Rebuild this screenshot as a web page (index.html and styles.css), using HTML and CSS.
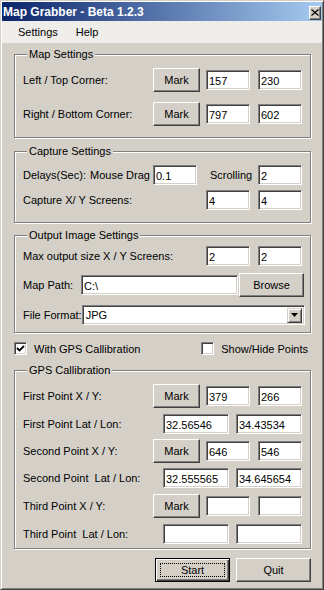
FILE: index.html
```html
<!DOCTYPE html>
<html lang="en">

<head>
    <meta charset="UTF-8">
    <title>Map Grabber - Beta 1.2.3</title>
    <link rel="stylesheet" href="styles.css">
</head>

<body>
    <div class="window">
        <div class="titlebar">
            <span class="title">Map Grabber - Beta 1.2.3</span>
            <span class="close">
                <svg width="8" height="7" viewBox="0 0 8 7"><path d="M0.5 0.5 L7.5 6.5 M7.5 0.5 L0.5 6.5" stroke="#000" stroke-width="1.3" fill="none"/></svg>
            </span>
        </div>
        <div class="menubar">
            <span class="menu">Settings</span>
            <span class="menu">Help</span>
        </div>

        <div class="client">
            <!-- Map settings -->
            <div class="group map">
                <div class="legend">Map Settings</div>
                <div class="row r1">
                    <span class="label">Left / Top Corner:</span>
                    <button class="btn mark">Mark</button>
                    <input class="field xy" value="157">
                    <input class="field xy gap" value="230">
                </div>
                <div class="row r2">
                    <span class="label">Right / Bottom Corner:</span>
                    <button class="btn mark">Mark</button>
                    <input class="field xy" value="797">
                    <input class="field xy gap" value="602">
                </div>
            </div>

            <!-- Capture settings -->
            <div class="group capture">
                <div class="legend">Capture Settings</div>
                <div class="row r1">
                    <span class="label delays">Delays(Sec):</span>
                    <span class="label drag">Mouse Drag</span>
                    <input class="field xy" value="0.1">
                    <span class="label scroll">Scrolling</span>
                    <input class="field xy" value="2">
                </div>
                <div class="row r2">
                    <span class="label">Capture X/ Y Screens:</span>
                    <input class="field xy" value="4">
                    <input class="field xy gap" value="4">
                </div>
            </div>

            <!-- Output image settings -->
            <div class="group output">
                <div class="legend">Output Image Settings</div>
                <div class="row r1">
                    <span class="label">Max output size X / Y Screens:</span>
                    <input class="field xy" value="2">
                    <input class="field xy gap" value="2">
                </div>
                <div class="row r2">
                    <span class="label short">Map Path:</span>
                    <input class="field path" value="C:\">
                    <button class="btn browse">Browse</button>
                </div>
                <div class="row r3">
                    <span class="label short">File Format:</span>
                    <div class="select">
                        <span class="value">JPG</span>
                        <span class="arrow">
                            <svg width="7" height="4" viewBox="0 0 7 4"><path d="M0 0 H7 L3.5 4 Z" fill="#000"/></svg>
                        </span>
                    </div>
                </div>
            </div>

            <div class="checks">
                <label class="check">
                    <span class="box">
                        <svg width="9" height="9" viewBox="0 0 9 9"><path d="M1 4 L3.5 6.5 L8 2" stroke="#000" stroke-width="1.8" fill="none"/></svg>
                    </span>
                    With GPS Callibration
                </label>
                <label class="check">
                    <span class="box"></span>
                    Show/Hide Points
                </label>
            </div>

            <!-- GPS callibration -->
            <div class="group gps">
                <div class="legend">GPS Callibration</div>
                <div class="row g1">
                    <span class="label">First Point X / Y:</span>
                    <button class="btn mark">Mark</button>
                    <input class="field xy" value="379">
                    <input class="field xy gap" value="266">
                </div>
                <div class="row g2">
                    <span class="label">First Point Lat / Lon:</span>
                    <input class="field ll" value="32.56546">
                    <input class="field ll" value="34.43534">
                </div>
                <div class="row g3">
                    <span class="label">Second Point X / Y:</span>
                    <button class="btn mark">Mark</button>
                    <input class="field xy" value="646">
                    <input class="field xy gap" value="546">
                </div>
                <div class="row g4">
                    <span class="label">Second Point&nbsp; Lat / Lon:</span>
                    <input class="field ll" value="32.555565">
                    <input class="field ll" value="34.645654">
                </div>
                <div class="row g5">
                    <span class="label">Third Point X / Y:</span>
                    <button class="btn mark">Mark</button>
                    <input class="field xy" value="">
                    <input class="field xy gap" value="">
                </div>
                <div class="row g6">
                    <span class="label">Third Point&nbsp; Lat / Lon:</span>
                    <input class="field ll" value="">
                    <input class="field ll" value="">
                </div>
            </div>

            <div class="actions">
                <button class="btn action default"><span class="focus">Start</span></button>
                <button class="btn action">Quit</button>
            </div>
        </div>
    </div>
</body>

</html>
```

FILE: styles.css
```css
body {
    margin: 0;
    background: #d4d0c8;
    font-family: "Liberation Sans", Arial, sans-serif;
    font-size: 11px;
    color: #000;
}

.window {
    width: 324px;
    height: 590px;
    box-sizing: border-box;
    padding: 1px;
    border: 1px solid;
    border-color: #d4d0c8 #404040 #404040 #d4d0c8;
    box-shadow: inset 1px 1px #fff, inset -1px -1px #808080;
    background: #d4d0c8;
    display: flex;
    flex-direction: column;
}

/* Title bar */
.titlebar {
    height: 19px;
    padding: 0 1px 0 1px;
    background: linear-gradient(to right, #0a246a, #a6caf0);
    color: #fff;
    font-size: 12px;
    font-weight: bold;
    display: flex;
    align-items: center;
    justify-content: space-between;
}

.close {
    width: 10px;
    height: 12px;
    border: 1px solid;
    border-color: #fff #404040 #404040 #fff;
    box-shadow: inset -1px -1px #808080;
    background: #d4d0c8;
    display: flex;
    align-items: center;
    justify-content: center;
    margin-top: 2px;
}

/* Menu */
.menubar {
    height: 22px;
    background: #efede9;
    display: flex;
    align-items: center;
    padding-left: 16px;
    gap: 18px;
}

/* Client area */
.client {
    padding: 0 10px 0 12px;
}

.group {
    border: 1px solid #808080;
    box-shadow: inset 1px 1px #fff, 1px 1px #fff;
    padding: 0 8px;
    width: 279px;
}

.legend {
    display: table;
    line-height: 13px;
    margin: -7px 0 0 4px;
    padding: 0 2px;
    background: #d4d0c8;
}

.row {
    display: flex;
    align-items: center;
}

.label {
    flex: 1;
    white-space: nowrap;
}

/* Controls */
.btn {
    font: inherit;
    color: #000;
    background: #d4d0c8;
    border: 1px solid;
    border-color: #fff #404040 #404040 #fff;
    box-shadow: inset -1px -1px #808080;
    padding: 0;
    height: 24px;
    box-sizing: border-box;
}

.field {
    font: inherit;
    color: #000;
    background: #fff;
    box-sizing: border-box;
    height: 20px;
    border: 1px solid;
    border-color: #808080 #fff #fff #808080;
    box-shadow: inset 1px 1px #404040, inset -1px -1px #d4d0c8;
    padding: 1px 2px 0;
    outline: none;
}

.mark {
    width: 47px;
    margin-right: 6px;
}

.xy {
    width: 44px;
}

.xy.gap {
    margin-left: 8px;
}

.ll {
    width: 66px;
    margin-left: 7px;
}

/* Map settings */
.map {
    margin-top: 11px;
    padding-bottom: 11px;
}

.map .r1 {
    margin-top: 7px;
}

.map .r2 {
    margin-top: 10px;
}

/* Capture settings */
.capture {
    margin-top: 13px;
    padding-bottom: 12px;
}

.capture .r1 {
    margin-top: 7px;
}

.capture .r2 {
    margin-top: 5px;
}

.delays {
    flex: 0 0 67px;
}

.drag {
    flex: 0 0 63px;
}

.scroll {
    margin-left: 13px;
}

/* Output settings */
.output {
    margin-top: 12px;
    padding-bottom: 7px;
}

.output .r1 {
    margin-top: 4px;
}

.output .r2 {
    margin-top: 7px;
    margin-right: -3px;
}

.output .r3 {
    margin-top: 8px;
    margin-right: -3px;
}

.short {
    flex: 0 0 58px;
}

.path {
    width: 157px;
}

.browse {
    width: 65px;
    margin-left: 1px;
}

.select {
    flex: 1;
    height: 20px;
    box-sizing: border-box;
    background: #fff;
    border: 1px solid;
    border-color: #808080 #fff #fff #808080;
    box-shadow: inset 1px 1px #404040, inset -1px -1px #d4d0c8;
    display: flex;
    align-items: center;
    justify-content: space-between;
    padding: 2px 2px 2px 3px;
}

.arrow {
    width: 15px;
    height: 15px;
    box-sizing: border-box;
    border: 1px solid;
    border-color: #d4d0c8 #404040 #404040 #d4d0c8;
    box-shadow: inset 1px 1px #fff, inset -1px -1px #808080;
    background: #d4d0c8;
    display: flex;
    align-items: center;
    justify-content: center;
}

/* Checkboxes */
.checks {
    display: flex;
    justify-content: space-between;
    margin-top: 9px;
    padding-right: 4px;
}

.check {
    display: flex;
    align-items: center;
    gap: 7px;
    height: 13px;
}

.box {
    width: 13px;
    height: 13px;
    box-sizing: border-box;
    background: #fff;
    border: 1px solid;
    border-color: #808080 #fff #fff #808080;
    box-shadow: inset 1px 1px #404040, inset -1px -1px #d4d0c8;
    display: flex;
    align-items: center;
    justify-content: center;
}

/* GPS callibration */
.gps {
    margin-top: 15px;
    padding-bottom: 4px;
}

.gps .g1 {
    margin-top: 7px;
}

.gps .g2 {
    margin-top: 6px;
}

.gps .g3,
.gps .g4 {
    margin-top: 5px;
}

.gps .g5,
.gps .g6 {
    margin-top: 6px;
}

/* Bottom buttons */
.actions {
    display: flex;
    justify-content: flex-end;
    gap: 6px;
    margin-top: 9px;
    width: 297px;
}

.action {
    width: 75px;
}

.default {
    border: 1px solid #000;
    box-shadow: inset 1px 1px #fff, inset -1px -1px #404040, inset -2px -2px #808080;
    padding: 4px;
}

.focus {
    display: block;
    height: 100%;
    box-sizing: border-box;
    border: 1px dotted #000;
    line-height: 12px;
}
```
